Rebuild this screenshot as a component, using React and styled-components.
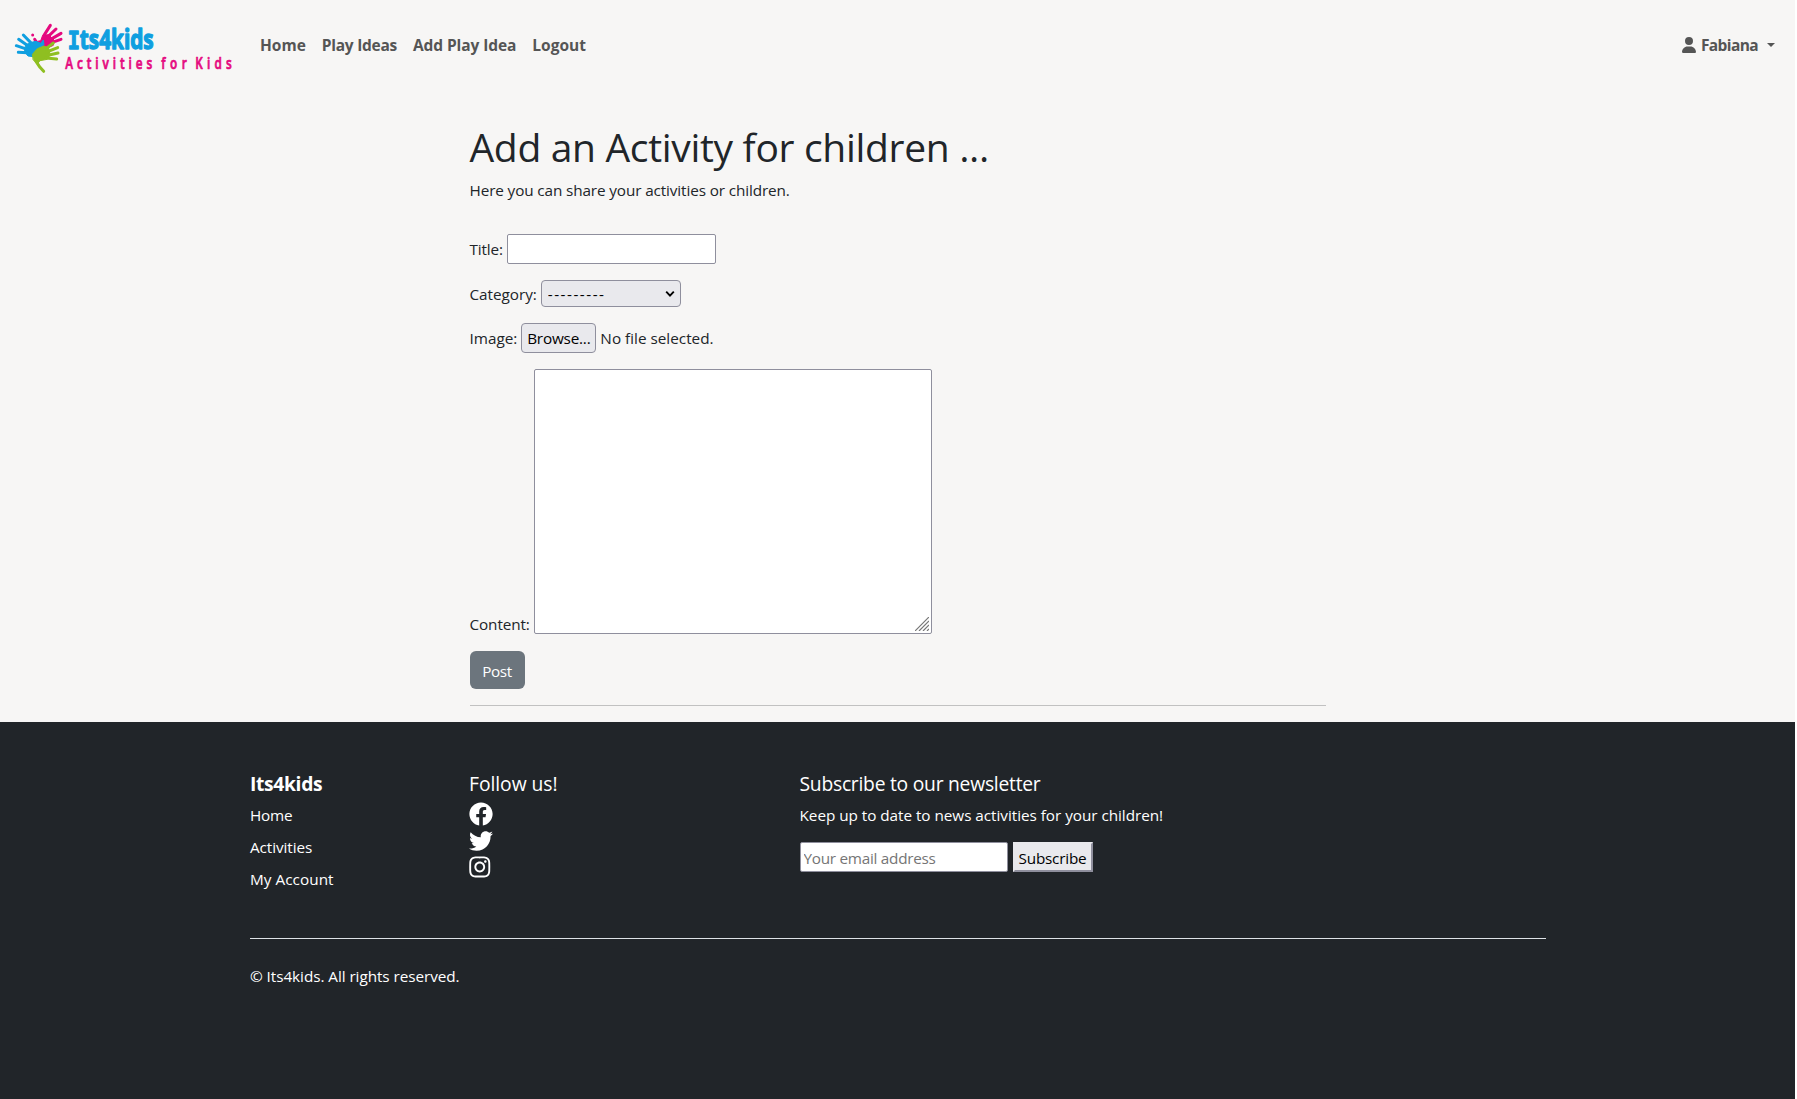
import React from "react";
import styled, { createGlobalStyle } from "styled-components";
import { FaFacebook, FaTwitter, FaInstagram } from "react-icons/fa";
import { FaUser } from "react-icons/fa6";

const GlobalStyle = createGlobalStyle`
  *, *::before, *::after { box-sizing: border-box; }
  body {
    margin: 0;
    overflow: hidden;
    background: #fff;
    color: #212529;
    font-family: "Open Sans", "Noto Sans", sans-serif;
    font-size: 15.3px;
    line-height: 24px;
  }
  input, select, textarea, button { font: inherit; margin: 0; }
`;

const Page = styled.div`
  display: flex;
  flex-direction: column;
  width: 1795px;
  height: 1099px;
  background: #f7f6f5;
`;

const Text = styled.span`
  white-space: pre;
  letter-spacing: ${(p) => p.$ls || 0}px;
`;

const Navbar = styled.header`
  display: flex;
  align-items: flex-start;
  height: 98px;
  padding: 10px 20px 0 0;
`;

const Brand = styled.a`
  display: block;
  width: 252px;
  height: 70px;
  svg { display: block; }
`;

const NavLinks = styled.nav`
  display: flex;
  flex: 1;
  padding-top: 23px;
`;

const NavLink = styled.a`
  padding: 0 8px;
  color: #555;
  font-size: 15.5px;
  font-weight: 700;
`;

const UserMenu = styled.a`
  display: flex;
  align-items: center;
  padding-top: 23px;
  color: #555;
  font-size: 15.5px;
  font-weight: 700;
`;

const UserIcon = styled(FaUser)`
  width: 14px;
  height: 16px;
  margin-right: 4.5px;
`;

const Caret = styled.span`
  margin-left: 9px;
  border-top: 4.5px solid #555;
  border-left: 4.5px solid transparent;
  border-right: 4.5px solid transparent;
`;

const Main = styled.main`
  width: 857px;
  height: 624px;
  margin-left: 469.5px;
  padding-top: 25px;
`;

const Title = styled.h1`
  margin: 0 0 7px;
  font-size: 39px;
  font-weight: 400;
  line-height: 48px;
`;

const Lead = styled.p`
  margin: 0 0 32px;
`;

const Field = styled.div`
  display: flex;
  align-items: ${(p) => (p.$end ? "flex-end" : "center")};
  gap: 4px;
  height: ${(p) => p.$h}px;
  margin-bottom: 16px;
`;

const Label = styled.label`
  margin-bottom: ${(p) => (p.$drop ? "-2px" : "0")};
`;

const TextInput = styled.input`
  width: ${(p) => p.$w || 209}px;
  height: 30px;
  padding: ${(p) => (p.placeholder ? "2px 3px 0" : "1px 3px")};
  border: 1px solid #8f8f9d;
  border-radius: 2px;
  background: #fff;
  letter-spacing: -0.27px;
  &::placeholder { color: #757575; opacity: 1; }
`;

const SelectBox = styled.div`
  position: relative;
  width: 140px;
  height: 27px;
  svg { position: absolute; right: 6px; top: 10px; }
`;

const Select = styled.select`
  appearance: none;
  width: 100%;
  height: 100%;
  padding: 0 6px;
  border: 1px solid #8f8f9d;
  border-radius: 4px;
  background: #e9e9ed;
  color: #000;
  letter-spacing: 1.49px;
`;

const BrowseButton = styled.button`
  width: 75px;
  height: 30px;
  padding: 0;
  border: 1px solid #8f8f9d;
  border-radius: 4px;
  background: #e9e9ed;
  color: #000;
`;

const AreaBox = styled.div`
  position: relative;
  width: 398px;
  height: 265px;
  svg { position: absolute; right: 3px; bottom: 3px; }
`;

const Area = styled.textarea`
  display: block;
  width: 100%;
  height: 100%;
  resize: none;
  border: 1px solid #8f8f9d;
  border-radius: 2px;
  background: #fff;
`;

const PostButton = styled.button`
  display: block;
  width: 55px;
  height: 38px;
  padding: 2px 0 0;
  margin-top: 17px;
  border: 0;
  border-radius: 6px;
  background: #6c757d;
  color: #fff;
`;

const Rule = styled.hr`
  height: 1px;
  margin: ${(p) => (p.$light ? "0" : "16px 1px 0 0")};
  border: 0;
  background: ${(p) => (p.$light ? "#dee2e6" : "#c1c1c1")};
`;

const Footer = styled.footer`
  flex: 1;
  padding: 50px 249px 0 250px;
  background: #212529;
  color: #fff;
`;

const Columns = styled.div`
  display: grid;
  grid-template-columns: 219px 330.5px 1fr;
  height: 166px;
`;

const Heading = styled.h5`
  margin: 0 0 7px;
  font-size: 19.3px;
  font-weight: ${(p) => (p.$bold ? 700 : 400)};
  line-height: 24px;
`;

const FooterLinks = styled.div`
  display: flex;
  flex-direction: column;
  gap: 8px;
`;

const Social = styled.div`
  display: flex;
  flex-direction: column;
  gap: 3px;
  margin-top: -1px;
  svg { display: block; height: 24px; }
  svg:last-child { width: 21.5px; margin-top: -1px; }
`;

const Newsletter = styled.form`
  display: flex;
  gap: 5px;
  margin-top: 15px;
`;

const SubscribeButton = styled.button`
  width: 80px;
  height: 30px;
  padding: 1px 0 0;
  border: 2px solid;
  border-color: #e9e9ed #8f8f9d #8f8f9d #e9e9ed;
  background: #e9e9ed;
  color: #000;
`;

const Copyright = styled.p`
  margin: 25px 0 0;
`;

function Hand({ color, palm, fingers }) {
  return (
    <g fill={color} stroke={color} strokeLinecap="round" strokeLinejoin="round">
      <path d={palm} strokeWidth="3" />
      <path d={fingers} fill="none" strokeWidth="9" />
    </g>
  );
}

function Logo() {
  return (
    <svg width="250" height="70" viewBox="0 0 750 210">
      <Hand
        color="#e5097f"
        palm="M104 96 L122 92 L128 76 L146 74 L162 90 L160 106 L134 118 L112 106 Z"
        fingers="M132 76 L151 46 M144 80 L168 57 M152 88 L183 70 M154 98 L183 88 M110 98 L104 88 M98 75 L98 75"
      />
      <Hand
        color="#0f9fe0"
        palm="M78 104 L98 96 L108 94 L122 100 L130 90 L132 104 L112 120 L100 140 L84 138 L74 126 Z"
        fingers="M98 104 L70 75 M88 110 L56 88 M82 118 L49 107 M82 128 L55 127"
      />
      <Hand
        color="#8fbf21"
        palm="M98 132 L112 116 L132 108 L146 114 L150 134 L142 148 L120 152 L112 162 L100 150 Z"
        fingers="M138 116 L160 99 M140 126 L173 113 M144 136 L174 129 M138 144 L170 147 M108 154 L120 172 L131 184"
      />
      <text
        x="203" y="118" fontSize="78" fontWeight="700" fontFamily="Open Sans"
        textLength="258" lengthAdjust="spacingAndGlyphs"
        fill="#0f9fe0" stroke="#0f9fe0" strokeWidth="4" strokeLinejoin="round"
      >
        <tspan fontFamily="DejaVu Sans Mono" fontSize="76">I</tspan>ts4kids
      </text>
      <g fill="#e5097f" stroke="#e5097f" strokeWidth="2.2" strokeLinejoin="round" fontFamily="Open Sans" fontWeight="600" fontSize="49">
        <g transform="translate(196 177) scale(.72 1)"><text textLength="362">Activities</text></g>
        <g transform="translate(484 177) scale(.72 1)"><text textLength="106">for</text></g>
        <g transform="translate(586 177) scale(.72 1)"><text textLength="152">Kids</text></g>
      </g>
    </svg>
  );
}

export default function App() {
  return (
    <Page>
      <GlobalStyle />
      <Navbar>
        <Brand><Logo /></Brand>
        <NavLinks>
          <NavLink>Home</NavLink>
          <NavLink><Text $ls={-0.27}>Play Ideas</Text></NavLink>
          <NavLink><Text $ls={-0.09}>Add Play Idea</Text></NavLink>
          <NavLink>Logout</NavLink>
        </NavLinks>
        <UserMenu>
          <UserIcon />
          <Text $ls={-0.6}>Fabiana</Text>
          <Caret />
        </UserMenu>
      </Navbar>

      <Main>
        <Title><Text $ls={-0.32}>Add an Activity for children ...</Text></Title>
        <Lead><Text $ls={-0.12}>Here you can share your activities or children.</Text></Lead>
        <Field $h={30}>
          <Label><Text $ls={-0.14}>Title:</Text></Label>
          <TextInput />
        </Field>
        <Field $h={27}>
          <Label><Text $ls={-0.04}>Category:</Text></Label>
          <SelectBox>
            <Select><option>---------</option></Select>
            <svg width="10" height="8" viewBox="0 0 10 8" fill="none" stroke="#000" strokeWidth="1.9">
              <path d="M1.2 1.7 L5 5.6 L8.8 1.7" />
            </svg>
          </SelectBox>
        </Field>
        <Field $h={30}>
          <Label><Text>Image:</Text></Label>
          <BrowseButton><Text $ls={-0.2}>Browse...</Text></BrowseButton>
          <Text>No file selected.</Text>
        </Field>
        <Field $h={265} $end>
          <Label $drop><Text $ls={-0.11}>Content:</Text></Label>
          <AreaBox>
            <Area />
            <svg width="14" height="14" viewBox="0 0 14 14" stroke="#777" strokeWidth="1.2">
              <path d="M0 14 L14 0 M4 14 L14 4 M8 14 L14 8 M12 14 L14 12" />
            </svg>
          </AreaBox>
        </Field>
        <PostButton><Text $ls={-0.4}>Post</Text></PostButton>
        <Rule />
      </Main>

      <Footer>
        <Columns>
          <div>
            <Heading $bold><Text $ls={-0.34}>Its4kids</Text></Heading>
            <FooterLinks>
              <Text as="a" $ls={-0.2}>Home</Text>
              <Text as="a" $ls={-0.08}>Activities</Text>
              <Text as="a" $ls={0.04}>My Account</Text>
            </FooterLinks>
          </div>
          <div>
            <Heading><Text $ls={-0.05}>Follow us!</Text></Heading>
            <Social>
              <FaFacebook size={24} />
              <FaTwitter size={24} />
              <FaInstagram size={24} />
            </Social>
          </div>
          <div>
            <Heading><Text $ls={-0.25}>Subscribe to our newsletter</Text></Heading>
            <Text $ls={-0.04}>Keep up to date to news activities for your children!</Text>
            <Newsletter>
              <TextInput $w={208} placeholder="Your email address" />
              <SubscribeButton type="button"><Text $ls={-0.21}>Subscribe</Text></SubscribeButton>
            </Newsletter>
          </div>
        </Columns>
        <Rule $light />
        <Copyright><Text $ls={-0.06}>© Its4kids. All rights reserved.</Text></Copyright>
      </Footer>
    </Page>
  );
}
